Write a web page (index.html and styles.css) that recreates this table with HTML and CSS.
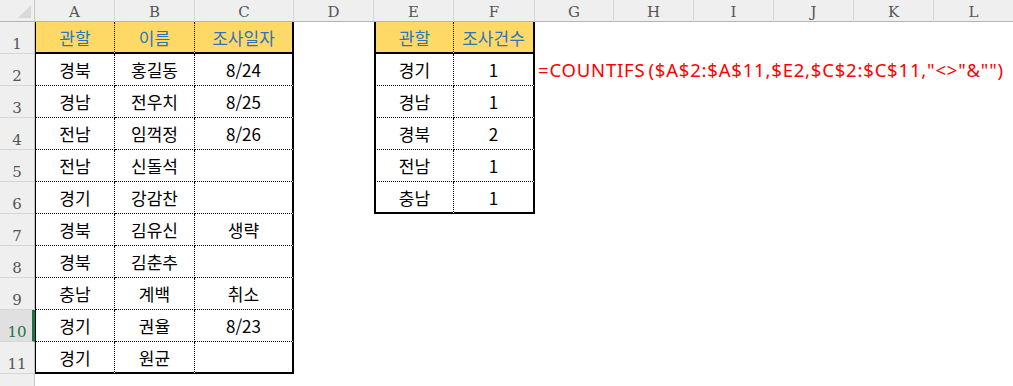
FILE: index.html
```html
<!DOCTYPE html>
<html lang="ko">
<head>
    <meta name="viewport" content="width=device-width, initial-scale=1.0">
    <title>COUNTIFS 조사건수</title>
    <link rel="stylesheet" href="styles.css">
</head>
<body>
    <div class="sheet">
        <!-- column headers -->
        <div class="corner"></div>
        <div class="col-head">A</div>
        <div class="col-head">B</div>
        <div class="col-head">C</div>
        <div class="col-head">D</div>
        <div class="col-head">E</div>
        <div class="col-head">F</div>
        <div class="col-head">G</div>
        <div class="col-head">H</div>
        <div class="col-head">I</div>
        <div class="col-head">J</div>
        <div class="col-head">K</div>
        <div class="col-head">L</div>

        <!-- row 1 -->
        <div class="row-head">1</div>
        <div class="cell box hd first">관할</div>
        <div class="cell box hd">이름</div>
        <div class="cell box hd last">조사일자</div>
        <div class="cell"></div>
        <div class="cell box hd start">관할</div>
        <div class="cell box hd last">조사건수</div>
        <div class="cell"></div>
        <div class="cell"></div><div class="cell"></div><div class="cell"></div><div class="cell"></div><div class="cell"></div>

        <!-- row 2 -->
        <div class="row-head">2</div>
        <div class="cell box first">경북</div>
        <div class="cell box">홍길동</div>
        <div class="cell box last">8/24</div>
        <div class="cell"></div>
        <div class="cell box start">경기</div>
        <div class="cell box last">1</div>
        <div class="cell formula">=COUNTIFS<span class="paren">(</span>$A$2:$A$11,$E2,$C$2:$C$11,"&lt;&gt;"&amp;"")</div>
        <div class="cell"></div><div class="cell"></div><div class="cell"></div><div class="cell"></div><div class="cell"></div>

        <!-- row 3 -->
        <div class="row-head">3</div>
        <div class="cell box first">경남</div>
        <div class="cell box">전우치</div>
        <div class="cell box last">8/25</div>
        <div class="cell"></div>
        <div class="cell box start">경남</div>
        <div class="cell box last">1</div>
        <div class="cell"></div>
        <div class="cell"></div><div class="cell"></div><div class="cell"></div><div class="cell"></div><div class="cell"></div>

        <!-- row 4 -->
        <div class="row-head">4</div>
        <div class="cell box first">전남</div>
        <div class="cell box">임꺽정</div>
        <div class="cell box last">8/26</div>
        <div class="cell"></div>
        <div class="cell box start">경북</div>
        <div class="cell box last">2</div>
        <div class="cell"></div>
        <div class="cell"></div><div class="cell"></div><div class="cell"></div><div class="cell"></div><div class="cell"></div>

        <!-- row 5 -->
        <div class="row-head">5</div>
        <div class="cell box first">전남</div>
        <div class="cell box">신돌석</div>
        <div class="cell box last"></div>
        <div class="cell"></div>
        <div class="cell box start">전남</div>
        <div class="cell box last">1</div>
        <div class="cell"></div>
        <div class="cell"></div><div class="cell"></div><div class="cell"></div><div class="cell"></div><div class="cell"></div>

        <!-- row 6 -->
        <div class="row-head">6</div>
        <div class="cell box first">경기</div>
        <div class="cell box">강감찬</div>
        <div class="cell box last"></div>
        <div class="cell"></div>
        <div class="cell box start bottom">충남</div>
        <div class="cell box last bottom">1</div>
        <div class="cell"></div>
        <div class="cell"></div><div class="cell"></div><div class="cell"></div><div class="cell"></div><div class="cell"></div>

        <!-- row 7 -->
        <div class="row-head">7</div>
        <div class="cell box first">경북</div>
        <div class="cell box">김유신</div>
        <div class="cell box last">생략</div>
        <div class="cell"></div><div class="cell"></div><div class="cell"></div><div class="cell"></div>
        <div class="cell"></div><div class="cell"></div><div class="cell"></div><div class="cell"></div><div class="cell"></div>

        <!-- row 8 -->
        <div class="row-head">8</div>
        <div class="cell box first">경북</div>
        <div class="cell box">김춘추</div>
        <div class="cell box last"></div>
        <div class="cell"></div><div class="cell"></div><div class="cell"></div><div class="cell"></div>
        <div class="cell"></div><div class="cell"></div><div class="cell"></div><div class="cell"></div><div class="cell"></div>

        <!-- row 9 -->
        <div class="row-head">9</div>
        <div class="cell box first">충남</div>
        <div class="cell box">계백</div>
        <div class="cell box last">취소</div>
        <div class="cell"></div><div class="cell"></div><div class="cell"></div><div class="cell"></div>
        <div class="cell"></div><div class="cell"></div><div class="cell"></div><div class="cell"></div><div class="cell"></div>

        <!-- row 10 (active row) -->
        <div class="row-head active">10</div>
        <div class="cell box first">경기</div>
        <div class="cell box">권율</div>
        <div class="cell box last">8/23</div>
        <div class="cell"></div><div class="cell"></div><div class="cell"></div><div class="cell"></div>
        <div class="cell"></div><div class="cell"></div><div class="cell"></div><div class="cell"></div><div class="cell"></div>

        <!-- row 11 -->
        <div class="row-head">11</div>
        <div class="cell box first bottom">경기</div>
        <div class="cell box bottom">원균</div>
        <div class="cell box last bottom"></div>
        <div class="cell"></div><div class="cell"></div><div class="cell"></div><div class="cell"></div>
        <div class="cell"></div><div class="cell"></div><div class="cell"></div><div class="cell"></div><div class="cell"></div>

        <!-- row 12, only its top shows -->
        <div class="row-head">12</div>
        <div class="cell"></div><div class="cell"></div><div class="cell"></div><div class="cell"></div>
        <div class="cell"></div><div class="cell"></div><div class="cell"></div><div class="cell"></div>
        <div class="cell"></div><div class="cell"></div><div class="cell"></div><div class="cell"></div>
    </div>
</body>
</html>
```

FILE: styles.css
```css
body {
    margin: 0;
    background: #fff;
    overflow: hidden;
    font-family: "Noto Sans CJK KR", "Noto Sans", sans-serif;
}
.sheet {
    display: grid;
    grid-template-columns: 35px 80px 80px 99px 80px 80px 81px 79px 80px 80px 80px 80px 80px;
    grid-template-rows: 22px repeat(12, 32px);
    height: 386px;
    overflow: hidden;
}
.sheet > div {
    box-sizing: border-box;
}

/* headers */
.corner {
    position: relative;
    background: #efefef;
    border-right: 1px solid #c6c6c6;
    border-bottom: 1px solid #b4b4b4;
}
.corner::after {
    content: "";
    position: absolute;
    right: 3px;
    bottom: 3px;
    width: 0;
    height: 0;
    border-left: 13px solid transparent;
    border-bottom: 13px solid #d9d9d9;
}
.col-head {
    background: #efefef;
    border-right: 1px solid #d6d6d6;
    border-bottom: 1px solid #b4b4b4;
    color: #555;
    font: 15px "DejaVu Serif", serif;
    text-align: center;
    padding-top: 3px;
    line-height: 19px;
}
.row-head {
    background: #efefef;
    border-right: 1px solid #c6c6c6;
    border-bottom: 1px solid #d6d6d6;
    color: #555;
    font: 15px "DejaVu Serif", serif;
    text-align: center;
    padding-top: 13px;
    line-height: 19px;
}
.row-head.active {
    background: #e0e0e0;
    color: #217346;
    border-right: 3px solid #217346;
    padding-left: 2px;
}

/* cells */
.cell {
    font-size: 17px;
    line-height: 32px;
    color: #000;
    text-align: center;
    white-space: nowrap;
}
.box {
    border-right: 1px dotted #000;
    border-bottom: 1px dotted #000;
    line-height: 31px;
}
.hd {
    background: #ffd966;
    color: #2f75b5;
    border-bottom: 2px solid #000;
}
.first {
    border-left: 1px solid #000;
}
.start {
    border-left: 2px solid #000;
}
.last {
    border-right: 2px solid #000;
}
.bottom {
    border-bottom: 2px solid #000;
}
.formula {
    text-align: left;
    color: #ff0000;
    font-family: "Noto Sans", sans-serif;
    font-size: 18.5px;
    letter-spacing: 0.8px;
    padding-left: 3px;
    overflow: visible;
}
.paren {
    margin-left: 3px;
}
```
